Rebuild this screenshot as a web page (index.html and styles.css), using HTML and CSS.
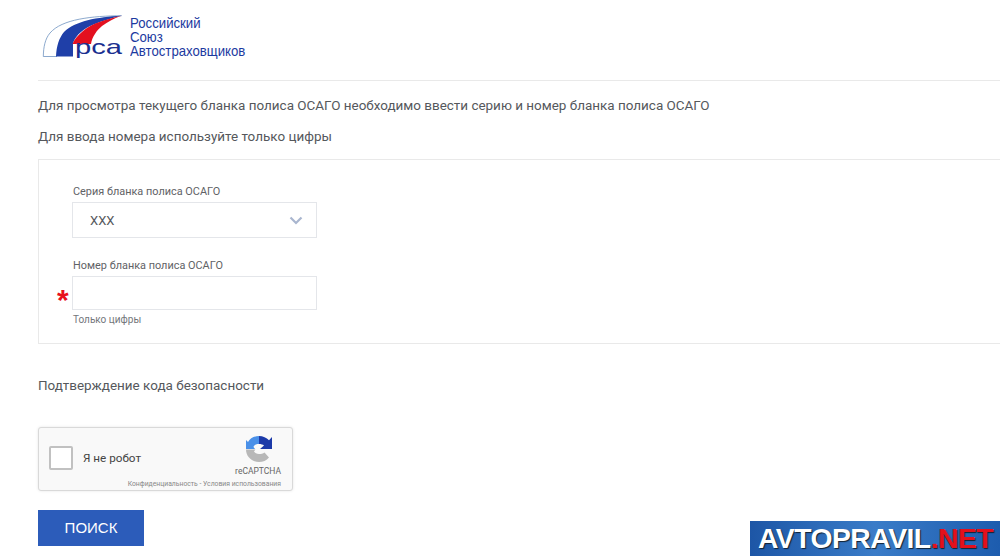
FILE: index.html
```html
<!DOCTYPE html>
<html lang="ru">
<head>
<meta charset="utf-8">
<title>Проверка бланка полиса ОСАГО</title>
<link rel="stylesheet" href="styles.css">
</head>
<body>
<div class="page">
  <header class="header">
    <svg class="logo" width="84" height="46" viewBox="0 0 84 46">
      <path d="M79.700 2.700C50 3 20 6 8 20C3 26 1.500 34 1.300 43.500H15" fill="#fff" stroke="#6f93c0" stroke-width="0.800"/>
      <path d="M79.700 2.700C55 4 33 8 22 19C17 25 14.500 33 14 43.500H31V30C34 22 42 15 51 11.700C60 8 70 5 79.700 2.700Z" fill="#1f3fa8"/>
      <path d="M79.700 2.700C65 6 50 10 41 18C36 22 32 27 30.500 31H49C50 24 55 17 60 13C66 9 72 5 79.700 2.700Z" fill="#e3101f"/>
      <text class="logo-letters" x="33" y="41" textLength="47" lengthAdjust="spacingAndGlyphs">рса</text>
    </svg>
    <div class="brand">Российский<br>Союз<br>Автостраховщиков</div>
  </header>
  <p class="intro first">Для просмотра текущего бланка полиса ОСАГО необходимо ввести серию и номер бланка полиса ОСАГО</p>
  <p class="intro second">Для ввода номера используйте только цифры</p>
  <section class="panel">
    <div class="field">
      <div class="label">Серия бланка полиса ОСАГО</div>
      <div class="select">
        <span>XXX</span>
        <svg class="chevron" width="14" height="9" viewBox="0 0 14 9"><path d="M1.500 1.500L7 7L12.500 1.500" fill="none" stroke="#a9b6cf" stroke-width="2.200"/></svg>
      </div>
    </div>
    <div class="field field-number">
      <div class="label">Номер бланка полиса ОСАГО</div>
      <div class="input-wrap">
        <span class="required">*</span>
        <div class="input"></div>
      </div>
      <div class="hint">Только цифры</div>
    </div>
  </section>
  <h2 class="confirm">Подтверждение кода безопасности</h2>
  <div class="captcha">
    <div class="checkbox"></div>
    <div class="robot">Я не робот</div>
    <div class="captcha-brand">
      <svg class="recaptcha" width="26" height="26" viewBox="0 0 26 26">
        <path d="M0 13.500C0 20.500 5.800 26 13 26C17 26 20.500 24.500 23 21.500L18.500 16.500C17 17.500 15 18 13 18C10.500 18 9 17 8 15.500L9.500 13.500Z" fill="#b8b8b8"/>
        <path d="M13 0C8 0 4 2.500 2 6L0 4V13H9L7.500 11C8 9 10 8 13 8Z" fill="#4a90e8"/>
        <path d="M13 0C17 0 20.500 1.700 23 4.300L26 1V13H14L18 9.500C17 8.500 15 8 13 8Z" fill="#1c3aa9"/>
      </svg>
      <div class="captcha-name">reCAPTCHA</div>
      <div class="captcha-links">Конфиденциальность - Условия использования</div>
    </div>
  </div>
  <button class="search" type="button">ПОИСК</button>
</div>
<div class="watermark"><span>AVTOPRAVIL</span><span class="net">.NET</span></div>
</body>
</html>
```
FILE: styles.css
```css
* { box-sizing: border-box; }
html, body { margin: 0; padding: 0; }
body {
  width: 1000px;
  height: 556px;
  overflow: hidden;
  background: #fff;
  font-family: Roboto, "Liberation Sans", sans-serif;
  color: #55585c;
  position: relative;
}
.page { padding-left: 38px; }
.header {
  height: 81px;
  border-bottom: 1px solid #e9e9e9;
  display: flex;
  align-items: flex-start;
  padding: 13px 0 0 4px;
}
.logo { flex: none; }
.logo-letters {
  font-family: "Liberation Sans", sans-serif;
  font-size: 21px;
  fill: #1a2f8f;
}
.brand {
  margin-left: 4px;
  padding-top: 3px;
  color: #1c3aa0;
  font-size: 14.500px;
  line-height: 14px;
  font-family: "Liberation Sans", sans-serif;
  transform: scaleX(.91);
  transform-origin: left top;
}
.intro { margin: 0; font-size: 13.460px; line-height: 20px; }
.first { padding-top: 15px; }
.second { padding-top: 11px; }
.panel {
  margin-top: 12px;
  width: 980px;
  height: 185px;
  border: 1px solid #e9e9e9;
  padding: 25px 0 0 33px;
}
.label { padding-left: 1px; font-size: 10.900px; line-height: 14px; color: #5f6266; }
.select, .input {
  width: 245px;
  border: 1px solid #e4e6ea;
  background: #fff;
}
.select {
  height: 36px;
  margin-top: 3px;
  display: flex;
  align-items: center;
  justify-content: space-between;
  padding: 0 13px 0 17px;
  font-size: 13px;
  color: #55585c;
}
.field-number { margin-top: 21px; }
.input-wrap { position: relative; margin-top: 3px; }
.input { height: 34px; }
.required {
  position: absolute;
  left: -15px;
  top: 9px;
  color: #e8101c;
  font-size: 30px;
  line-height: 30px;
  font-weight: 700;
  font-family: "Liberation Sans", sans-serif;
}
.hint { margin-top: 4px; padding-left: 1px; font-size: 10px; line-height: 12px; color: #73767a; }
.confirm {
  margin: 32px 0 0;
  font-size: 13.460px;
  line-height: 20px;
  font-weight: 400;
}
.captcha {
  margin-top: 31px;
  width: 255px;
  height: 64px;
  background: #f9f9f9;
  border: 1px solid #d9d9d9;
  border-radius: 3px;
  box-shadow: 0 0 3px rgba(0,0,0,.1);
  display: flex;
  position: relative;
  padding: 18px 0 0 10px;
}
.checkbox {
  width: 24px;
  height: 24px;
  background: #fff;
  border: 2px solid #c1c1c1;
  border-radius: 2px;
}
.robot { margin-left: 10px; font-size: 11.700px; line-height: 24px; color: #444; }
.captcha-brand {
  position: absolute;
  right: 11px;
  top: 8px;
  display: flex;
  flex-direction: column;
  align-items: flex-end;
}
.recaptcha { margin-right: 9px; }
.captcha-name { font-size: 8.500px; line-height: 10px; margin-top: 4px; color: #666; }
.captcha-links { font-size: 6.800px; line-height: 8px; margin-top: 4px; color: #888; white-space: nowrap; }
.search {
  display: block;
  margin-top: 19px;
  width: 106px;
  height: 36px;
  border: 0;
  padding: 0 0 2px;
  background: #2c5cba;
  color: #fff;
  font-family: "Liberation Sans", sans-serif;
  font-size: 15px;
}
.watermark {
  position: absolute;
  right: 0;
  bottom: 0;
  width: 250px;
  height: 35px;
  background: linear-gradient(90deg, #1d56a6, #3a7cc8 50%, #1d5cae);
  color: #fff;
  font-family: "Liberation Sans", sans-serif;
  font-weight: 700;
  font-size: 28.300px;
  line-height: 35px;
  padding-left: 8px;
  white-space: nowrap;
  letter-spacing: -0.5px;
  text-shadow: 1px 1px 1px #123;
}
.net { color: #e3101c; }
```
